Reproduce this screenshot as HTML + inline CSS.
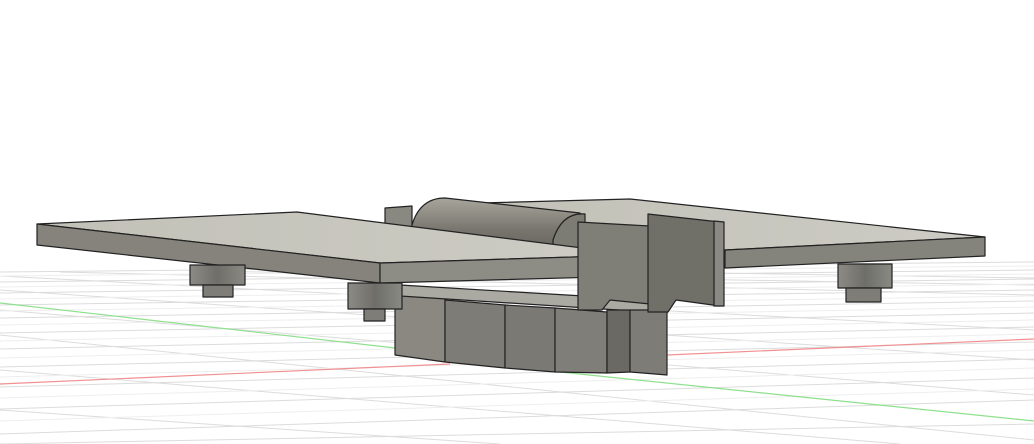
<!DOCTYPE html>
<html><head><style>html,body{margin:0;padding:0;background:#fff;width:1034px;height:444px;overflow:hidden}</style></head>
<body>
<svg width="1034" height="444" viewBox="0 0 1034 444" xmlns="http://www.w3.org/2000/svg">
<defs>
<linearGradient id="cyl" x1="0" y1="0" x2="0" y2="1"><stop offset="0" stop-color="#a8a69c"/><stop offset="0.5" stop-color="#77756d"/><stop offset="1" stop-color="#5e5c56"/></linearGradient>
<linearGradient id="top" x1="0" y1="0" x2="1" y2="0"><stop offset="0" stop-color="#c2c1b8"/><stop offset="1" stop-color="#cdccc4"/></linearGradient>
<linearGradient id="post" x1="0" y1="0" x2="1" y2="0"><stop offset="0" stop-color="#8c8b84"/><stop offset="0.5" stop-color="#6f6e69"/><stop offset="1" stop-color="#8a8983"/></linearGradient>
</defs>
<g stroke="#dcdcdc" stroke-width="1" fill="none">
<path d="M0 272 L1034 262"/><path d="M0 282 L1034 270"/><path d="M0 293 L1034 279"/><path d="M0 305 L1034 290"/><path d="M0 318 L1034 301"/><path d="M0 333 L1034 313"/><path d="M0 349 L1034 327"/><path d="M0 367 L1034 342"/><path d="M0 387 L1034 359"/><path d="M0 409 L1034 378"/><path d="M0 434 L1034 400"/><path d="M0 444 L1034 424"/>
<path d="M0 276 L1034 330"/><path d="M0 290 L1034 360"/><path d="M0 310 L1034 395"/><path d="M0 335 L1034 440"/><path d="M0 370 L900 444"/><path d="M0 410 L500 444"/>
<path d="M60 272 L1034 295"/><path d="M200 271 L1034 285"/><path d="M400 268 L1034 278"/>
</g>
<g stroke="#eeeeee" stroke-width="1" fill="none">
<path d="M0 276 L1034 266"/><path d="M0 287 L1034 274"/><path d="M0 299 L1034 284"/><path d="M0 311 L1034 296"/><path d="M0 325 L1034 307"/><path d="M0 341 L1034 320"/><path d="M0 358 L1034 334"/><path d="M0 377 L1034 350"/><path d="M0 398 L1034 368"/><path d="M0 421 L1034 389"/>
</g>
<path d="M0 303 L395 348" stroke="#8ee08e" stroke-width="1.2"/>
<path d="M560 372 L1034 421" stroke="#8ee08e" stroke-width="1.2"/>
<path d="M0 384 L450 364" stroke="#f09090" stroke-width="1.2"/>
<path d="M667 355 L1034 339" stroke="#f09090" stroke-width="1.2"/>
<g stroke="#222" stroke-width="1.2" stroke-linejoin="round">
<!-- right plate -->
<polygon points="480,203 630,199 985,237 725,250 480,240" fill="url(#top)"/>
<polygon points="725,250 985,237 985,256 725,268" fill="#85847c"/>
<!-- right standoff -->
<rect x="838" y="264" width="54" height="24" fill="url(#post)"/>
<rect x="846" y="288" width="35" height="14" fill="#7e7d77"/>
<!-- back bracket -->
<polygon points="385,208 412,206 412,260 385,258" fill="#898881"/>
<!-- cylinder -->
<path d="M412 225 Q420 198 445 198 L580 213 L580 262 L412 250 Z" fill="url(#cyl)"/>
<path d="M553 240 Q562 212 585 214 L585 262 L553 260 Z" fill="#7c7b74"/>
<!-- lower box -->
<polygon points="395,288 445,296 445,362 395,355" fill="#8a8881"/>
<polygon points="400,285 650,300 650,312 400,296" fill="#aaa9a2"/>
<polygon points="445,300 505,305 505,368 445,362" fill="#7d7c76"/>
<polygon points="505,305 555,308 555,372 505,368" fill="#7a7973"/>
<polygon points="555,308 607,312 607,373 555,372" fill="#807e78"/>
<polygon points="607,310 630,310 630,372 607,373" fill="#6a6963"/>
<polygon points="630,310 667,310 667,375 630,372" fill="#7e7c76"/>
<!-- left plate -->
<polygon points="37,224 297,212 638,255 380,263" fill="url(#top)"/>
<polygon points="37,224 380,263 380,283 37,245" fill="#85837b"/>
<polygon points="380,263 638,255 638,276 380,283" fill="#8d8c85"/>
<!-- left standoffs -->
<rect x="190" y="265" width="55" height="20" fill="url(#post)"/>
<rect x="203" y="285" width="30" height="12" fill="#7e7d77"/>
<rect x="348" y="283" width="54" height="26" fill="url(#post)"/>
<rect x="364" y="309" width="21" height="12" fill="#7e7d77"/>
<!-- uprights -->
<polygon points="578,222 650,226 650,304 610,300 602,310 578,310" fill="#7f7e77"/>
<polygon points="648,214 720,222 720,306 676,300 668,312 648,312" fill="#707069"/>
<polygon points="714,221 724,222 724,306 714,306" fill="#8a8983"/>
</g>
</svg>
</body></html>
